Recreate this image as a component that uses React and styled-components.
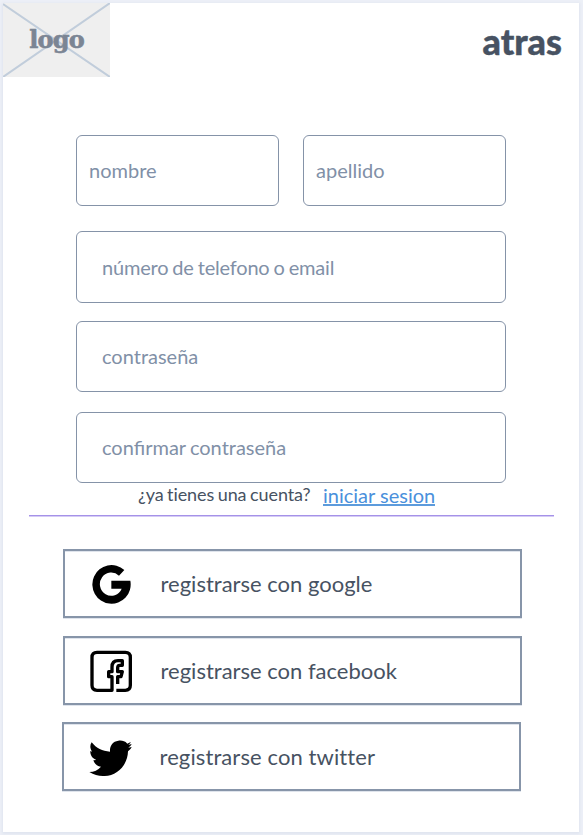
import React from "react";
import styled, { createGlobalStyle } from "styled-components";

const GlobalStyle = createGlobalStyle`
  *, *::before, *::after { box-sizing: border-box; }
  body { margin: 0; background: #edf0f7; font-family: Lato, "Liberation Sans", sans-serif; }
`;

const Page = styled.div`
  height: 835px;
  padding: 3px 4px 3px 3px;
  overflow: hidden;
`;

const Card = styled.main`
  height: 829px;
  background: #fff;
  box-shadow: 0 1px 3px 1px #dfe4ef;
  color: #475262;
`;

const Header = styled.header`
  display: flex;
  justify-content: space-between;
  align-items: flex-start;
  height: 132px;
`;

const Logo = styled.div`
  position: relative;
  display: flex;
  justify-content: center;
  width: 107px;
  height: 74px;
  background: #efefef;
  color: #7b8594;
  font: bold 24px/28px "DejaVu Serif", serif;
  letter-spacing: -0.8px;
  padding-top: 23px;
  -webkit-text-stroke: 0.6px #7b8594;

  svg { position: absolute; inset: 0; }
  span { position: relative; }
`;

const Back = styled.a`
  margin: 16px 17px 0 0;
  font-size: 36px;
  line-height: 44px;
  font-weight: 900;
  -webkit-text-stroke: 0.4px #475262;
`;

const Form = styled.form`
  display: flex;
  flex-direction: column;
  width: 430px;
  margin-left: 73px;
`;

const NameRow = styled.div`
  display: grid;
  grid-template-columns: 203px 203px;
  gap: 24px;
  margin-bottom: 25px;
`;

const Field = styled.input`
  display: block;
  width: 100%;
  height: ${(p) => p.$height || 71}px;
  margin: 0 0 ${(p) => p.$gap || 0}px;
  padding: 0 0 ${(p) => p.$lift ?? 2}px ${(p) => p.$indent || 25}px;
  border: 1px solid #8593a8;
  border-radius: 6px;
  outline: none;
  background: transparent;
  font: 400 20px Lato, sans-serif;
  letter-spacing: ${(p) => p.$tracking || "normal"};
  word-spacing: -0.9px;
  color: #8190a7;
  &::placeholder { color: #8190a7; opacity: 1; }
`;

const Account = styled.div`
  display: flex;
  height: 32px;
  padding-left: 135px;
  font-size: 18px;
  line-height: 22px;
  font-variant-ligatures: none;
`;

const Question = styled.span`
  width: 185px;
  white-space: nowrap;
  letter-spacing: -0.1px;
  word-spacing: -0.9px;
`;

const Login = styled.a`
  height: 23px;
  border-bottom: 2px solid #5c9bdc;
  color: #4a90dc;
  font-size: 20px;
  line-height: 24px;
`;

const Divider = styled.hr`
  width: 525px;
  height: 2px;
  margin: 0 0 0 26px;
  border: 0;
  border-top: 1px solid #a592e8;
  background: #d5cbf5;
`;

const SocialList = styled.div`
  display: flex;
  flex-direction: column;
  gap: 18px;
  padding: 32px 0 0 60px;
`;

const SocialButton = styled.button`
  display: flex;
  align-items: center;
  width: 459px;
  height: 69px;
  margin: ${(p) => (p.$last ? "-1px 0 0 -1px" : "0")};
  padding: 0 0 0 22px;
  border: 2px solid #8795a9;
  box-shadow: 0 1px 0 #dfe4ec, inset 0 1px 0 #dfe4ec;
  background: transparent;
  color: #475262;
  font: 400 22px Lato, sans-serif;
  letter-spacing: ${(p) => (p.$last ? "0.1px" : "normal")};
  font-variant-ligatures: none;

  svg { width: 50px; height: 50px; margin-right: 23.5px; flex: none; }
`;

/* Icon artboards are 150 units for a 50px box. */
const Google = () => (
  <svg viewBox="2 1 150 150">
    <path d="M114 34 A57.5 58 0 1 0 132 66 H75 V90 H106 A34 35 0 1 1 98 51 Z" />
  </svg>
);

const Facebook = () => (
  <svg viewBox="0 0 150 150" fill="none" stroke="#000" strokeWidth="10" strokeLinejoin="round">
    <path d="M88 133 H115 Q130 133 130 118 V34 Q130 19 115 19 H30 Q15 19 15 34 V118 Q15 133 30 133 H75 V92 H65 V77 H75 V63 Q75 44 93 44 H106 V58 H98 Q92 58 92 66 V77 H106 L102 92 H92 V114" />
  </svg>
);

const Twitter = () => (
  <svg viewBox="0 -6 150 150">
    <path d="M134 24 L124 29 C116 20 107 19 97 20 C80 22 71 35 72 53 C49 52 31 43 17 25 C11 34 12 44 18 53 L13 51 C12 63 19 73 31 78 L22 79 C25 89 34 97 45 98 C36 109 24 113 10 114 C25 123 39 127 56 126 C93 125 125 94 126 52 C131 48 135 44 137 39 L127 41 C132 38 135 34 137 30 L127 33 C131 30 133 28 134 24 Z" />
  </svg>
);

export default function App() {
  return (
    <>
      <GlobalStyle />
      <Page>
        <Card>
          <Header>
            <Logo>
              <svg width="107" height="74" viewBox="0 0 107 74" stroke="#c1cddb" strokeWidth="2">
                <path d="M0 1 L107 74 M107 0 L0 74" />
              </svg>
              <span>logo</span>
            </Logo>
            <Back>atras</Back>
          </Header>
          <Form>
            <NameRow>
              <Field placeholder="nombre" $indent={12} />
              <Field placeholder="apellido" $indent={12} />
            </NameRow>
            <Field placeholder="número de telefono o email" $height={72} $gap={18} $lift={0} $tracking="-0.2px" />
            <Field placeholder="contraseña" type="password" $gap={20} />
            <Field placeholder="confirmar contraseña" type="password" />
          </Form>
          <Account>
            <Question>¿ya tienes una cuenta?</Question>
            <Login>iniciar sesion</Login>
          </Account>
          <Divider />
          <SocialList>
            <SocialButton><Google />registrarse con google</SocialButton>
            <SocialButton><Facebook />registrarse con facebook</SocialButton>
            <SocialButton $last><Twitter />registrarse con twitter</SocialButton>
          </SocialList>
        </Card>
      </Page>
    </>
  );
}
